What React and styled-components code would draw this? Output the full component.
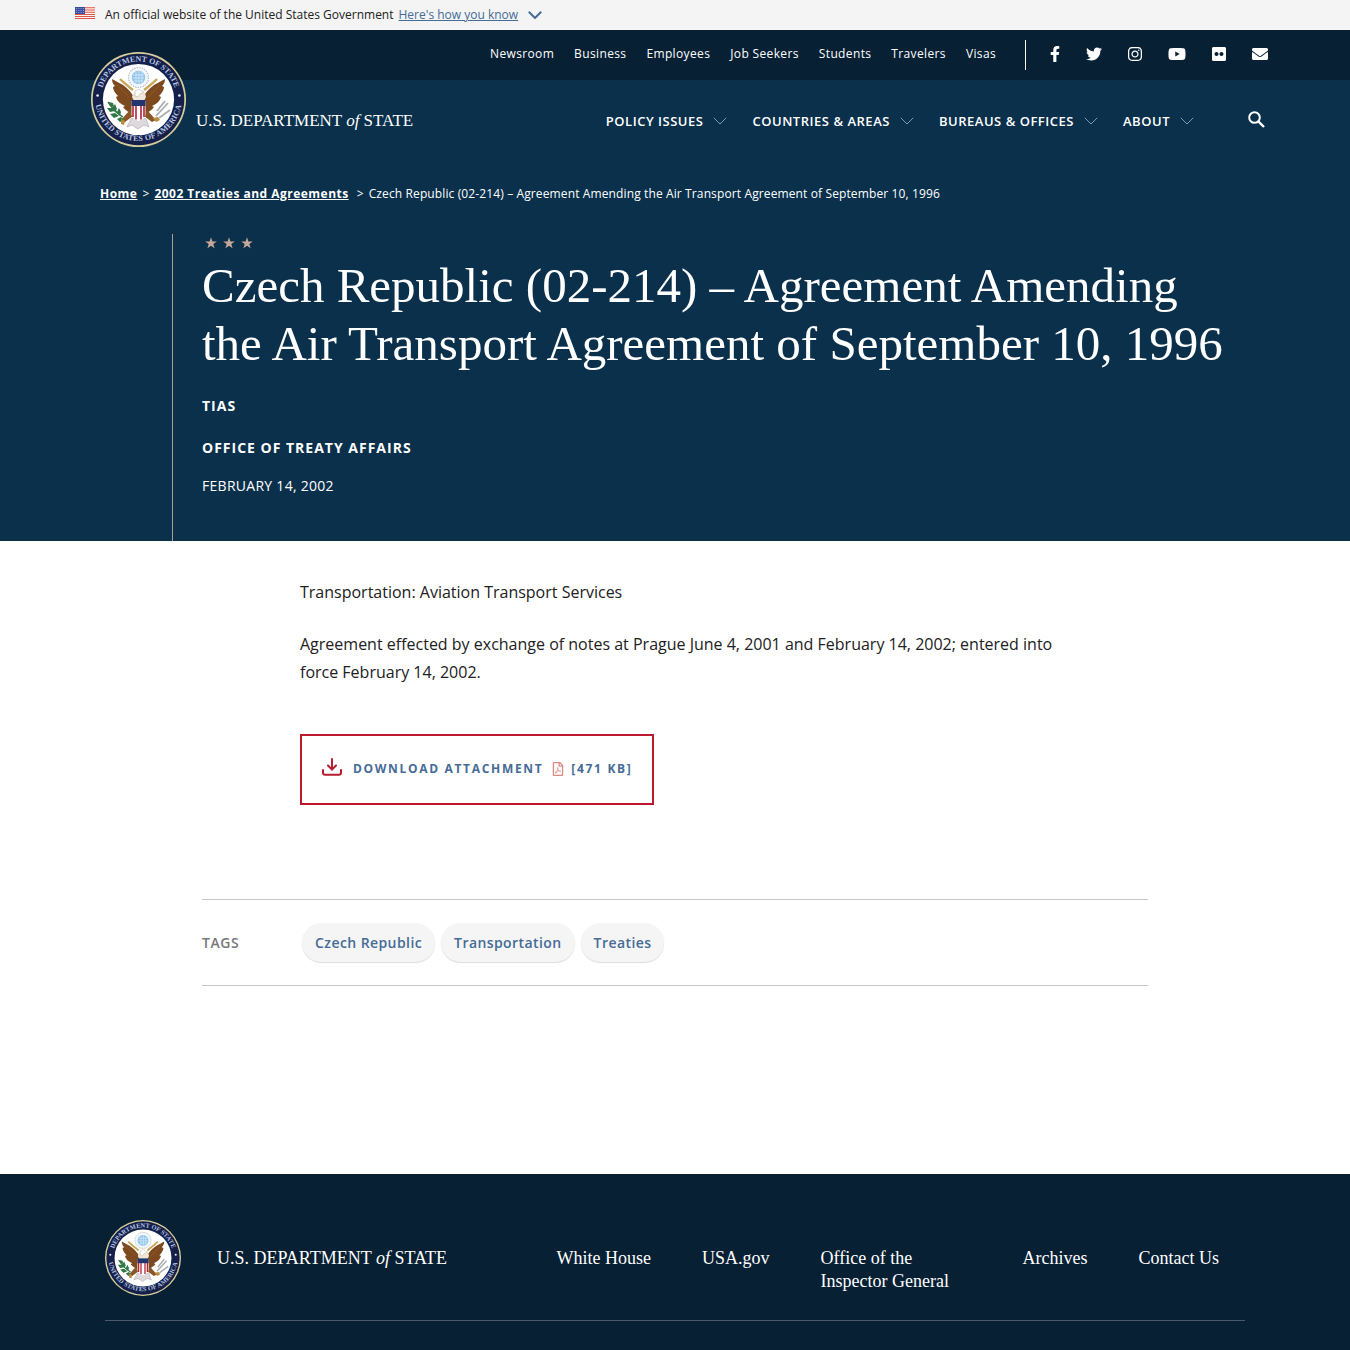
import React, { useId } from "react";
import styled, { createGlobalStyle } from "styled-components";
import {
  FaFacebookF,
  FaTwitter,
  FaInstagram,
  FaYoutube,
  FaFlickr,
  FaEnvelope,
  FaRegFilePdf,
} from "react-icons/fa";

const sans = `"Open Sans", "Noto Sans", sans-serif`;
const serif = `"Liberation Serif", "Times New Roman", serif`;
const navy = "#0a304c";
const midnight = "#082034";
const link = "#456b96";

const GlobalStyle = createGlobalStyle`
  *, *::before, *::after { box-sizing: border-box; }
  body { margin: 0; background: #fff; color: #212121; font-family: ${sans}; }
  a { color: inherit; text-decoration: none; }
  button { font: inherit; color: inherit; background: none; border: 0; padding: 0; cursor: pointer; }
  ul, ol { list-style: none; margin: 0; padding: 0; }
  svg { display: block; flex: none; }
`;

const Banner = styled.div`
  display: flex;
  align-items: center;
  height: 30px;
  padding: 0 75px;
  background: #f4f4f4;
  font-size: 12px;
  line-height: 28px;
`;
const BannerFlag = styled.span`
  padding-bottom: 4px;
`;
const BannerText = styled.span`
  margin: 0 5px 0 10px;
`;
const BannerButton = styled.button`
  display: flex;
  align-items: center;
  gap: 10px;
  color: ${link};
  span { text-decoration: underline; }
`;

const Header = styled.header`
  display: flex;
  justify-content: space-between;
  padding: 0 82px 0 91px;
  background: linear-gradient(${midnight} 50px, ${navy} 50px);
  color: #fff;
`;
const Brand = styled.a`
  display: flex;
  align-items: center;
  gap: ${(p) => p.$gap}px;
  font-family: ${serif};
  font-size: ${(p) => p.$size}px;
  white-space: nowrap;
`;
const HeaderBrand = styled(Brand)`
  align-items: flex-end;
  align-self: flex-start;
  padding-top: 22px;
  span { line-height: 24px; padding-bottom: 14px; }
`;
const HeaderNavs = styled.div`
  display: flex;
  flex-direction: column;
  align-items: flex-end;
`;
const UtilityBar = styled.div`
  display: flex;
  align-items: center;
  height: 50px;
`;
const UtilityList = styled.ul`
  display: flex;
  gap: 20px;
  margin-right: 29px;
  padding-bottom: 2px;
  font-size: 12px;
  line-height: 16px;
  letter-spacing: 0.03em;
`;
const SocialList = styled.ul`
  display: flex;
  align-items: center;
  gap: 26px;
  height: 30px;
  padding: 0 0 2px 24px;
  border-left: 1px solid #fff;
`;
const SocialItem = styled.li`
  svg { width: ${(p) => p.$width}px; height: 16px; }
`;
const MainBar = styled.nav`
  display: flex;
  align-items: center;
  gap: 51px;
  height: 82px;
`;
const MenuList = styled.ul`
  display: flex;
  gap: 25px;
`;
const MenuButton = styled.button`
  display: flex;
  align-items: center;
  gap: 10px;
  font-size: 13px;
  font-weight: 600;
  line-height: 18px;
  letter-spacing: 0.04em;
  text-transform: uppercase;
`;
const SearchButton = styled.button`
  padding: 0 3px 4px;
`;

const Hero = styled.section`
  padding: 22px 100px 0;
  background: ${navy};
  color: #fff;
`;
const Breadcrumbs = styled.ol`
  display: flex;
  gap: 5px;
  font-size: 12px;
  line-height: 20px;
  letter-spacing: 0.01em;
  a { font-weight: 700; text-decoration: underline; letter-spacing: 0.04em; }
  li + li::before { content: ">"; margin-right: 5px; }
  li + li + li { margin-left: 3px; }
`;
const HeroBody = styled.div`
  margin: 30px 0 0 72px;
  padding: 3px 0 45px 29px;
  border-left: 1px solid #a79e9b;
`;
const Stars = styled.div`
  display: flex;
  gap: 6px;
  padding-left: 3px;
`;
const Title = styled.h1`
  max-width: 1040px;
  margin: 8px 0 0;
  font-family: ${serif};
  font-size: 49px;
  font-weight: 400;
  line-height: 58px;
`;
const Office = styled.p`
  margin: ${(p) => p.$top}px 0 0;
  font-size: 14px;
  font-weight: 700;
  line-height: 20px;
  letter-spacing: 1px;
  text-transform: uppercase;
`;
const PostDate = styled.p`
  margin: 18px 0 0;
  font-size: 14px;
  line-height: 20px;
  letter-spacing: 0.02em;
  text-transform: uppercase;
`;

const Article = styled.article`
  max-width: 770px;
  margin: 0 auto;
  padding: 37px 0 0 10px;
  font-size: 16px;
  line-height: 28px;
  p { margin: 0 0 24px; }
`;
const Download = styled.a`
  display: inline-flex;
  align-items: center;
  height: 71px;
  margin-top: 24px;
  padding: 0 20px 6px;
  border: 2px solid #be1730;
  color: ${link};
  font-size: 12px;
  font-weight: 700;
  line-height: 18px;
  letter-spacing: 0.14em;
  text-transform: uppercase;
`;
const DownloadLabel = styled.span`
  margin: 4px 8px 0 11px;
`;
const FileSize = styled.span`
  display: flex;
  align-items: center;
  gap: 6px;
  margin-top: 4px;
  svg { color: #dc8a83; }
`;

const Tags = styled.section`
  display: flex;
  align-items: center;
  max-width: 946px;
  height: 87px;
  margin: 94px auto 188px;
  border: solid #c4c6c8;
  border-width: 1px 0;
`;
const TagsTitle = styled.h2`
  width: 100px;
  margin: 0;
  color: #77787a;
  font-size: 14px;
  font-weight: 600;
  line-height: 20px;
  letter-spacing: 0.04em;
`;
const TagList = styled.ul`
  display: flex;
  gap: 6px;
`;
const Tag = styled.a`
  display: block;
  padding: 0 13px;
  border-radius: 20px;
  background: #f5f5f6;
  box-shadow: 0 1px 1px #dcdcdc;
  color: ${link};
  font-size: 14px;
  font-weight: 600;
  line-height: 39px;
  letter-spacing: 0.03em;
`;

const Footer = styled.footer`
  padding: 46px 24px 29px;
  background: ${midnight};
  color: #fff;
`;
const FooterInner = styled.div`
  display: flex;
  align-items: center;
  justify-content: space-between;
  max-width: 1140px;
  margin: 0 auto;
  padding: 0 26px 24px 0;
  border-bottom: 1px solid #4a5a6b;
`;
const FooterLinks = styled.ul`
  display: flex;
  gap: 51px;
  margin-top: 24px;
  font-family: ${serif};
  font-size: 18px;
  line-height: 23px;
`;
const FooterItem = styled.li`
  width: ${(p) => (p.$wide ? "151px" : "auto")};
  white-space: ${(p) => (p.$wide ? "normal" : "nowrap")};
`;

const ArcText = styled.text`
  font-family: ${serif};
  font-weight: 700;
  font-size: 8px;
  letter-spacing: ${(p) => p.$tracking}px;
  fill: #b9c6e4;
`;

function Seal({ size }) {
  const id = useId();
  return (
    <svg width={size} height={size} viewBox="0 0 95 95" role="img" aria-label="Seal of the Department of State">
      <circle cx="47.5" cy="47.5" r="47.5" fill="#d9cf9c" />
      <circle cx="47.5" cy="47.5" r="45.8" fill="#14204a" />
      <circle cx="47.5" cy="47.5" r="35.6" fill="#fff" />
      <path id={`${id}t`} d="M9.5 47.5a38 38 0 0 1 76 0" fill="none" />
      <path id={`${id}b`} d="M4 45.500a43.5 43.5 0 0 0 87 0" fill="none" />
      <ArcText textAnchor="middle" $tracking={0}>
        <textPath href={`#${id}t`} startOffset="50%">DEPARTMENT OF STATE</textPath>
      </ArcText>
      <ArcText textAnchor="middle" $tracking={0.2}>
        <textPath href={`#${id}b`} startOffset="50%">UNITED STATES OF AMERICA</textPath>
      </ArcText>
      <circle cx="6.6" cy="43.5" r="1.3" fill="#e8edf8" />
      <circle cx="88.4" cy="43.5" r="1.3" fill="#e8edf8" />
      <circle cx="47.5" cy="25.5" r="10" fill="#f3f6fa" stroke="#b9c0c8" strokeWidth="1.2" strokeDasharray="1.5 1" />
      <circle cx="47.5" cy="25.5" r="6.8" fill="#8fc4ea" />
      <path d="M42 23h11M41.500 26h12M43 29h9M45 20v11M48 19v13M51 20v11" stroke="#d8ecfa" strokeWidth=".8" />
      <path d="M29 27c5 5 8 7 13 11M66 27c-5 5-8 7-13 11" stroke="#c9a659" strokeWidth="2.4" fill="none" />
      <path
        d="M21 27c4 2 7 4 11 6 4 3 7 6 9 9l3 8-1 11c-5 0-9-3-11-6l2-1c-5-2-8-5-9-9l2-1c-3-3-5-6-5-9l2-1c-2-2-3-4-3-7z"
        fill="#7d4a20"
      />
      <path
        d="M74 27c-4 2-7 4-11 6-4 3-7 6-9 9l-3 8 1 11c5 0 9-3 11-6l-2-1c5-2 8-5 9-9l-2-1c3-3 5-6 5-9l-2-1c2-2 3-4 3-7z"
        fill="#7d4a20"
      />
      <path d="M26 33c5 5 10 9 13 14M69 33c-5 5-10 9-13 14" stroke="#99632f" strokeWidth=".7" fill="none" />
      <path d="M38 43h19l2 14-5 6H41l-5-6z" fill="#7d4a20" />
      <path d="M42 42c2-4 9-5 12-1l1 4-2 4H43l-2-4z" fill="#efe7da" />
      <path d="M44 39l4-2 5 3-4 2-2 3-3-1z" fill="#fff" stroke="#bba98a" strokeWidth=".5" />
      <path d="M39 58l-9 10 4 2 8-6M56 58l9 10-4 2-8-6" fill="#8a5627" />
      <path d="M40 67l7-3 8 3 3 8-5-2-6 4-6-4-5 2z" fill="#ddd9dc" stroke="#a8a3a7" strokeWidth=".6" />
      <path d="M40.500 49h14v13c0 4-4 6-7 7-3-1-7-3-7-7z" fill="#fff" />
      <path d="M42 52v13M45 52v15.500M50 52v15.500M53 52v13" stroke="#b22338" strokeWidth="1.6" />
      <path d="M40.500 48h14v6h-14z" fill="#22356f" />
      <path d="M17 50c4 6 8 11 15 15" stroke="#2f7040" strokeWidth="1.4" fill="none" />
      <path
        d="M18 50l4 1 1 4-4-1zM16 56l5 0 3 3-5 1zM24 52l2 5-2 3-3-4zM19 62l5-1 4 3-5 2zM28 56l2 4-1 4-3-4zM26 67l4-2 3 3-4 2z"
        fill="#2f7746"
      />
      <path d="M65 64l12-13M66 59l8-10M68 66l11-8" stroke="#a9adae" strokeWidth="1.8" fill="none" />
      <path d="M62 66l5-1 2 3-4 2zM30 67l4 2-1 4-3-1z" fill="#b78b3c" />
    </svg>
  );
}

function Chevron({ width, height, stroke, weight }) {
  return (
    <svg width={width} height={height} viewBox="0 0 14 8" fill="none" stroke={stroke} strokeWidth={weight} aria-hidden="true">
      <path d="M.8.8 7 7 13.200.8" />
    </svg>
  );
}

function Flag() {
  return (
    <svg width="20" height="12" viewBox="0 0 20 12" aria-hidden="true">
      <path fill="#fff3ee" d="M0 0h20v12H0z" />
      <path d="M0 .7h20M0 3h20M0 5.300h20M0 7.500h20M0 9.500h20M0 11.500h20" stroke="#dd5548" strokeWidth="1.1" />
      <path fill="#3a4ea0" d="M0 0h10v7H0z" />
      <path d="M1 1.500h8M1 3.500h8M1 5.500h8" stroke="#a9b6e0" strokeDasharray="1 1.300" strokeWidth=".8" />
    </svg>
  );
}

function Star() {
  return (
    <svg width="12" height="12" viewBox="0 0 12 12" aria-hidden="true">
      <path fill="#c7a799" d="M6 .3 7.400 4.400h4.400L8.300 7l1.300 4.300L6 8.700l-3.600 2.600L3.700 7 .2 4.400h4.400z" />
    </svg>
  );
}

function SearchIcon() {
  return (
    <svg width="17" height="17" viewBox="0 0 17 17" fill="none" stroke="#fff" aria-hidden="true">
      <circle cx="6.500" cy="6.500" r="5.300" strokeWidth="2" />
      <path d="M10.300 10.300 16 16" strokeWidth="2.400" />
    </svg>
  );
}

function DownloadIcon() {
  return (
    <svg width="20" height="18" viewBox="0 0 20 18" fill="none" stroke="#b51d30" strokeWidth="2" strokeLinecap="round" aria-hidden="true">
      <path d="M10 1v10M6 7.500l4 4 4-4M1 12v2.500Q1 16.800 3.200 16.800h13.600Q19 16.800 19 14.500V12" />
    </svg>
  );
}

const utilityLinks = ["Newsroom", "Business", "Employees", "Job Seekers", "Students", "Travelers", "Visas"];
const socials = [
  ["Facebook", FaFacebookF, 10],
  ["Twitter", FaTwitter, 16],
  ["Instagram", FaInstagram, 14],
  ["YouTube", FaYoutube, 18],
  ["Flickr", FaFlickr, 14],
  ["Email", FaEnvelope, 16],
];
const menus = ["Policy Issues", "Countries & Areas", "Bureaus & Offices", "About"];
const tags = ["Czech Republic", "Transportation", "Treaties"];
const footerLinks = ["White House", "USA.gov", "Office of the Inspector General", "Archives", "Contact Us"];

export default function App() {
  return (
    <>
      <GlobalStyle />
      <Banner>
        <BannerFlag><Flag /></BannerFlag>
        <BannerText>An official website of the United States Government</BannerText>
        <BannerButton type="button">
          <span>Here's how you know</span>
          <Chevron width={14} height={8} stroke={link} weight={2} />
        </BannerButton>
      </Banner>

      <Header>
        <HeaderBrand href="#" $gap={10} $size={17}>
          <Seal size={95} />
          <span>U.S. DEPARTMENT <i>of</i> STATE</span>
        </HeaderBrand>
        <HeaderNavs>
          <UtilityBar>
            <UtilityList>
              {utilityLinks.map((t) => (
                <li key={t}><a href="#">{t}</a></li>
              ))}
            </UtilityList>
            <SocialList>
              {socials.map(([name, Icon, width]) => (
                <SocialItem key={name} $width={width}><a href="#" aria-label={name}><Icon /></a></SocialItem>
              ))}
            </SocialList>
          </UtilityBar>
          <MainBar>
            <MenuList>
              {menus.map((t) => (
                <li key={t}>
                  <MenuButton type="button">
                    {t}
                    <Chevron width={14} height={8} stroke="#7d9ab4" weight={1} />
                  </MenuButton>
                </li>
              ))}
            </MenuList>
            <SearchButton type="button" aria-label="Search"><SearchIcon /></SearchButton>
          </MainBar>
        </HeaderNavs>
      </Header>

      <main>
        <Hero>
          <Breadcrumbs>
            <li><a href="#">Home</a></li>
            <li><a href="#">2002 Treaties and Agreements</a></li>
            <li>Czech Republic (02-214) – Agreement Amending the Air Transport Agreement of September 10, 1996</li>
          </Breadcrumbs>
          <HeroBody>
            <Stars><Star /><Star /><Star /></Stars>
            <Title>Czech Republic (02-214) – Agreement Amending the Air Transport Agreement of September 10, 1996</Title>
            <Office $top={23}>TIAS</Office>
            <Office $top={22}>Office of Treaty Affairs</Office>
            <PostDate>February 14, 2002</PostDate>
          </HeroBody>
        </Hero>

        <Article>
          <p>Transportation: Aviation Transport Services</p>
          <p>
            Agreement effected by exchange of notes at Prague June 4, 2001 and February 14, 2002; entered into force
            February 14, 2002.
          </p>
          <Download href="#">
            <DownloadIcon />
            <DownloadLabel>Download Attachment</DownloadLabel>
            <FileSize><FaRegFilePdf size={14} />[471 KB]</FileSize>
          </Download>
        </Article>

        <Tags>
          <TagsTitle>TAGS</TagsTitle>
          <TagList>
            {tags.map((t) => (
              <li key={t}><Tag href="#">{t}</Tag></li>
            ))}
          </TagList>
        </Tags>
      </main>

      <Footer>
        <FooterInner>
          <Brand href="#" $gap={36} $size={18}>
            <Seal size={76} />
            <span>U.S. DEPARTMENT <i>of</i> STATE</span>
          </Brand>
          <FooterLinks>
            {footerLinks.map((t) => (
              <FooterItem key={t} $wide={t.length > 20}><a href="#">{t}</a></FooterItem>
            ))}
          </FooterLinks>
        </FooterInner>
      </Footer>
    </>
  );
}
